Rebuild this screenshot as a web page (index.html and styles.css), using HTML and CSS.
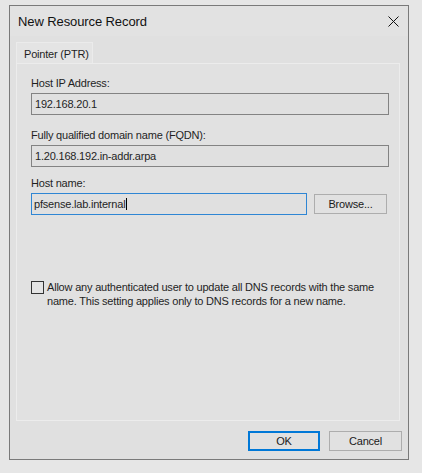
FILE: index.html
```html
<!DOCTYPE html>
<html lang="en">
<head>
<meta charset="utf-8">
<title>New Resource Record</title>
<link rel="stylesheet" href="styles.css">
</head>
<body>
<div class="dialog">
  <div class="titlebar">
    <span class="title">New Resource Record</span>
    <span class="close">
      <svg width="11" height="11" viewBox="0 0 11 11"><path d="M0.5 0.5 L10.5 10.5 M10.5 0.5 L0.5 10.5" stroke="#111" stroke-width="1" fill="none"/></svg>
    </span>
  </div>
  <div class="body">
    <div class="tabs"><div class="tab">Pointer (PTR)</div></div>
    <div class="panel">
      <div class="field field-first">
        <div class="label">Host IP Address:</div>
        <div class="input">192.168.20.1</div>
      </div>
      <div class="field field-second">
        <div class="label">Fully qualified domain name (FQDN):</div>
        <div class="input">1.20.168.192.in-addr.arpa</div>
      </div>
      <div class="field field-third">
        <div class="label">Host name:</div>
        <div class="row">
          <div class="input input-focus">pfsense.lab.internal<span class="caret"></span></div>
          <div class="btn btn-browse">Browse...</div>
        </div>
      </div>
      <div class="check-row">
        <span class="checkbox"></span>
        <span class="check-text">Allow any authenticated user to update all DNS records with the same<br>name. This setting applies only to DNS records for a new name.</span>
      </div>
    </div>
    <div class="footer">
      <div class="btn btn-default">OK</div>
      <div class="btn">Cancel</div>
    </div>
  </div>
</div>
</body>
</html>
```
FILE: styles.css
```css
html, body {
  margin: 0;
  padding: 0;
}

body {
  background: #e6e6e6;
  font-family: "Liberation Sans", Arial, sans-serif;
  font-size: 11px;
  letter-spacing: -0.2px;
  color: #1f1f1f;
}

.dialog {
  margin: 5px 0 0 9px;
  width: 400px;
  height: 455px;
  box-sizing: border-box;
  border: 1px solid #7a7a7a;
  background: #e0e0e0;
  display: flex;
  flex-direction: column;
}

.titlebar {
  height: 30px;
  display: flex;
  align-items: center;
  justify-content: space-between;
  padding-left: 8px;
  background: #e2e2e2;
}

.title {
  font-size: 13px;
  letter-spacing: -0.1px;
  color: #111;
  padding-top: 1px;
}

.close {
  width: 11px;
  height: 11px;
  margin-right: 9px;
  display: flex;
}

.body {
  flex: 1;
  display: flex;
  flex-direction: column;
  padding: 6px 8px 0 6px;
}

.tabs {
  display: flex;
}

.tab {
  height: 21px;
  box-sizing: border-box;
  padding: 5px 3px 0 7px;
  background: #e4e4e4;
  border: 1px solid #ebebeb;
  border-bottom: none;
  line-height: 13px;
  white-space: nowrap;
}

.panel {
  height: 358px;
  width: 384px;
  box-sizing: border-box;
  border: 1px solid #ececec;
  background: #e1e1e1;
  padding: 13px 10px 0 14px;
}

.label {
  line-height: 13px;
  height: 13px;
  margin-bottom: 3px;
}

.field-second {
  margin-top: 14px;
}

.field-third {
  margin-top: 10px;
}

.input {
  height: 22px;
  box-sizing: border-box;
  border: 1px solid #838383;
  background: #e0e0e0;
  padding: 0 3px;
  line-height: 20px;
  white-space: nowrap;
}

.row {
  display: flex;
  align-items: center;
  gap: 7px;
}

.input-focus {
  width: 276px;
  border-color: #2f86d4;
  padding-left: 2px;
  display: flex;
  align-items: center;
}

.caret {
  display: inline-block;
  width: 1px;
  height: 12px;
  background: #000;
  margin-left: 1px;
}

.btn {
  height: 20px;
  width: 73px;
  box-sizing: border-box;
  border: 1px solid #adadad;
  background: #e1e1e1;
  display: flex;
  align-items: center;
  justify-content: center;
  color: #1a1a1a;
}

.check-row {
  margin-top: 65px;
  display: flex;
  align-items: flex-start;
  gap: 3px;
}

.checkbox {
  width: 13px;
  height: 13px;
  box-sizing: border-box;
  border: 1px solid #333;
  background: #e4e4e4;
  margin-top: 1px;
  flex: none;
}

.check-text {
  line-height: 14px;
}

.footer {
  margin-top: 10px;
  display: flex;
  justify-content: flex-end;
  gap: 9px;
  margin-right: -2px;
}

.btn-default {
  width: 72px;
  border: 2px solid #0078d7;
}
```
